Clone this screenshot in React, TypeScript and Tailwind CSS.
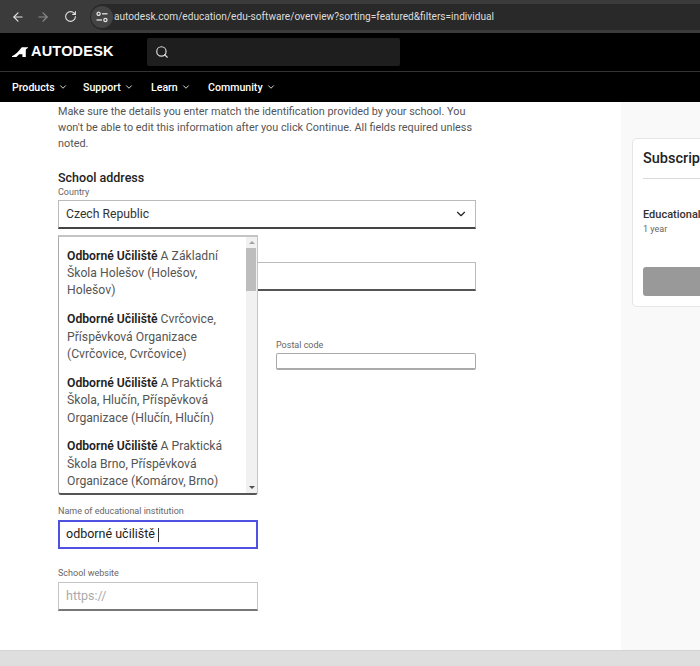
import { ArrowLeft, ArrowRight, ChevronDown, RotateCw, Search } from "lucide-react";

const NAV_ITEMS = [
  { label: "Products", className: "w-[71px]" },
  { label: "Support", className: "w-[68px]" },
  { label: "Learn", className: "w-[57px]" },
  { label: "Community", className: "" },
];

const SCHOOLS = [
  { rest: "A Základní", lines: ["Škola Holešov (Holešov,", "Holešov)"] },
  { rest: "Cvrčovice,", lines: ["Příspěvková Organizace", "(Cvrčovice, Cvrčovice)"] },
  { rest: "A Praktická", lines: ["Škola, Hlučín, Příspěvková", "Organizace (Hlučín, Hlučín)"] },
  { rest: "A Praktická", lines: ["Škola Brno, Příspěvková", "Organizace (Komárov, Brno)"] },
];

function TuneIcon() {
  return (
    <svg width="14" height="14" viewBox="0 0 14 14" fill="none" stroke="#e3e3e3" strokeWidth="1.3">
      <circle cx="3.6" cy="3.8" r="1.6" />
      <path d="M7 3.8h5.5" />
      <circle cx="10.4" cy="10" r="1.6" />
      <path d="M1.5 10H7" />
    </svg>
  );
}

function BrowserBar() {
  return (
    <div className="flex h-[33px] items-center bg-[#3b3b3b] pl-[11px]">
      <ArrowLeft className="h-[14px] w-[14px] text-[#e3e3e3]" />
      <ArrowRight className="ml-[11px] h-[14px] w-[14px] text-[#8f8f8f]" />
      <RotateCw className="ml-[14px] h-[13px] w-[13px] text-[#e3e3e3]" />
      <div className="ml-[13px] flex h-[26px] flex-1 items-center rounded-l-full bg-[#292929] pl-[1px]">
        <div className="flex h-[22px] w-[22px] items-center justify-center rounded-full bg-[#444444]">
          <TuneIcon />
        </div>
        <span className="ml-[1px] font-['Roboto',sans-serif] text-[10.15px] whitespace-nowrap text-[#dcdcdc]">
          autodesk.com/education/edu-software/overview?sorting=featured&amp;filters=individual
        </span>
      </div>
    </div>
  );
}

function SiteHeader() {
  return (
    <header className="bg-black text-white">
      <div className="flex h-[39px] items-center border-b border-[#333333] pl-[12px]">
        <svg width="16" height="10" viewBox="0 0 16 10" fill="white">
          <path d="M0 10 L0 9.3 C3.2 8 7 4 9.8 0.3 L16 0.3 L16 0.9 C14.4 1.4 13.8 2.2 13.8 3.2 L13.8 10 L10.4 10 L10.4 7.2 L7.2 7.2 L4.4 10 Z" />
        </svg>
        <span className="ml-[3px] w-[116px] font-['Liberation_Sans',sans-serif] text-[14.5px] font-bold tracking-[0.2px]">
          AUTODESK
        </span>
        <div className="flex h-[28px] w-[253px] items-center rounded-[2px] bg-[#1e1e1e] pl-[8px]">
          <Search className="h-[14px] w-[14px] text-[#dddddd]" />
        </div>
      </div>
      <nav className="flex h-[30px] items-center pt-[1px] pl-[12px] font-['Roboto',sans-serif] text-[10.6px] font-medium">
        {NAV_ITEMS.map((item) => (
          <div key={item.label} className={`flex items-center gap-[3px] ${item.className}`}>
            {item.label}
            <ChevronDown className="h-[10px] w-[10px]" />
          </div>
        ))}
      </nav>
    </header>
  );
}

function SchoolDropdown() {
  return (
    <div className="absolute top-[6px] left-0 z-10 flex h-[260px] w-[200px] overflow-hidden rounded-b-[3px] border-t-2 border-r border-b-2 border-l border-[#c4c4c4] border-b-[#555555] border-l-[#aaaaaa] bg-white">
      <ul className="flex-1 pt-[10.5px] pl-[8px]">
        {SCHOOLS.map((school, i) => (
          <li key={i} className="mb-[11.4px] text-[12.2px] leading-[17.4px] whitespace-nowrap text-[#555555]">
            <div>
              <strong className="font-semibold text-[#222222]">Odborné Učiliště</strong> {school.rest}
            </div>
            {school.lines.map((line) => (
              <div key={line}>{line}</div>
            ))}
          </li>
        ))}
      </ul>
      <div className="flex w-[11px] flex-col bg-[#f1f1f1]">
        <div className="flex h-[11px] items-center justify-center">
          <div className="h-0 w-0 border-x-[3px] border-b-[3px] border-x-transparent border-b-[#a3a3a3]" />
        </div>
        <div className="h-[43px] w-[10px] bg-[#bdbdbd]" />
        <div className="flex-1" />
        <div className="flex h-[11px] items-center justify-center">
          <div className="h-0 w-0 border-x-[3px] border-t-[3px] border-x-transparent border-t-[#505050]" />
        </div>
      </div>
    </div>
  );
}

function SchoolForm() {
  return (
    <div className="min-w-0 flex-1 overflow-hidden pl-[58px] font-['Roboto',sans-serif]">
      <div className="w-[418px]">
        <p className="mt-[2px] text-[10.85px] leading-[16px] text-[#555555]">
          Make sure the details you enter match the identification provided by your school. You won't be able to edit
          this information after you click Continue. All fields required unless noted.
        </p>
        <h2 className="mt-[18px] text-[12.5px] leading-[16px] font-medium text-[#222222]">School address</h2>
        <label className="block text-[9px] leading-[12px] text-[#666666]">Country</label>
        <div className="mt-[2px] flex h-[29px] items-center justify-between border border-b-2 border-[#bbbbbb] border-b-[#444444] pr-[7px] pl-[7px] text-[12.2px] text-[#333333]">
          Czech Republic
          <ChevronDown className="h-[14px] w-[14px] text-[#222222]" />
        </div>
        <div className="relative pt-[33px]">
          <SchoolDropdown />
          <div className="h-[29px] border border-b-2 border-[#bbbbbb] border-b-[#555555]" />
          <div className="mt-[48px] ml-[218px] text-[9px] leading-[12px] text-[#666666]">Postal code</div>
          <div className="mt-[2px] ml-[218px] h-[17px] rounded-[2px] border border-b-2 border-[#aaaaaa]" />
        </div>
        <div className="w-[200px]">
          <label className="mt-[135px] block text-[9px] leading-[12px] text-[#666666]">
            Name of educational institution
          </label>
          <div className="mt-[3px] flex h-[29px] items-center border-2 border-[#4f52e0] pl-[6px] text-[12.5px] text-[#222222]">
            odborné učiliště
            <span className="ml-[3px] h-[14px] w-px bg-[#333333]" />
          </div>
          <label className="mt-[18px] block text-[9px] leading-[12px] text-[#666666]">School website</label>
          <div className="mt-[3px] flex h-[29px] items-center border border-b-2 border-[#c4c4c4] border-b-[#777777] pl-[7px] text-[12.5px] text-[#aaaaaa]">
            https://
          </div>
        </div>
      </div>
    </div>
  );
}

function OrderSummary() {
  return (
    <aside className="w-[79px] shrink-0 overflow-hidden bg-[#f9f9f9] pt-[36px] pl-[11px] font-['Roboto',sans-serif]">
      <div className="h-[169px] w-[200px] rounded-[5px] border border-[#e6e6e6] bg-white pt-[10px] pl-[10px]">
        <h3 className="text-[14.5px] leading-[20px] font-medium text-[#222222]">Subscription</h3>
        <div className="mt-[9px] border-t border-[#d9d9d9]" />
        <div className="mt-[29px] text-[11px] leading-[14px] font-medium text-[#333333]">Educational</div>
        <div className="text-[9px] leading-[14px] text-[#666666]">1 year</div>
        <div className="mt-[31px] h-[29px] rounded-[3px] bg-[#999999]" />
      </div>
    </aside>
  );
}

export default function App() {
  return (
    <div className="flex h-[666px] w-[700px] flex-col overflow-hidden bg-white">
      <BrowserBar />
      <SiteHeader />
      <main className="flex min-h-0 flex-1">
        <SchoolForm />
        <OrderSummary />
      </main>
      <div className="h-[16px] shrink-0 border-t border-[#d4d4d4] bg-[#dedede]" />
    </div>
  );
}
